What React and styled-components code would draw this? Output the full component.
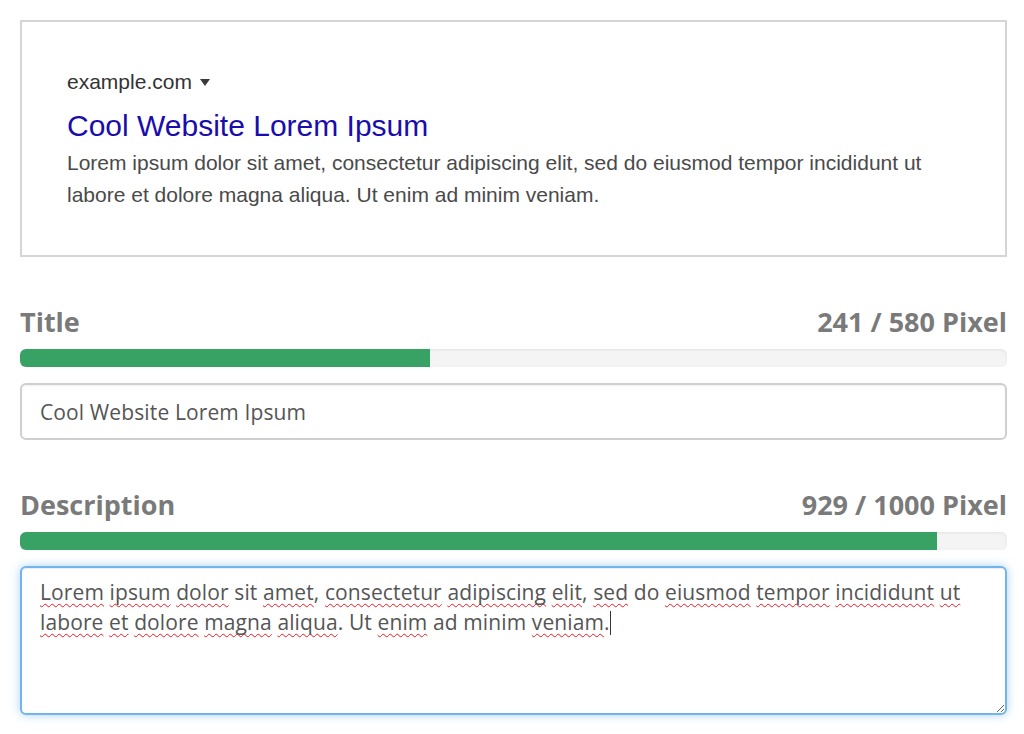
import React from "react";
import styled, { createGlobalStyle } from "styled-components";

const Global = createGlobalStyle`
  html, body { margin: 0; padding: 0; background: #fff; }
  body { font-family: "Open Sans", "Liberation Sans", sans-serif; }
  * { box-sizing: border-box; }
`;

const Page = styled.div`
  width: 1024px;
  padding: 20px 17px 20px 20px;
`;

const Preview = styled.div`
  border: 2px solid #d5d5d5;
  padding: 46px 45px 44px 45px;
  font-family: "Liberation Sans", Arial, sans-serif;
`;

const Url = styled.div`
  display: flex;
  align-items: center;
  font-size: 21px;
  line-height: 27px;
  color: #333;
  margin-bottom: 11px;
`;

const Caret = styled.span`
  display: inline-block;
  margin-left: 8px;
  margin-top: 2px;
  width: 0;
  height: 0;
  border-left: 5.5px solid transparent;
  border-right: 5.5px solid transparent;
  border-top: 7px solid #3a3a3a;
`;

const SerpTitle = styled.div`
  font-size: 30px;
  line-height: 39px;
  color: #1a0dab;
`;

const SerpDesc = styled.div`
  margin-top: 2px;
  font-size: 21px;
  line-height: 32px;
  color: #4a4a4a;
`;

const Section = styled.div`
  margin-top: 47px;
`;

const LabelRow = styled.div`
  display: flex;
  justify-content: space-between;
  align-items: baseline;
  font-family: "Open Sans", sans-serif;
  font-weight: 700;
  font-size: 27px;
  line-height: 36px;
  color: #7a7a7a;
  margin-bottom: 9px;
`;

const Track = styled.div`
  height: 18px;
  border-radius: 6px;
  background: #f4f4f4;
  box-shadow: inset 0 1px 3px rgba(0, 0, 0, 0.08);
  overflow: hidden;
  margin-bottom: 16px;
`;

const Fill = styled.div`
  height: 100%;
  background: #38a264;
`;

const Input = styled.input`
  display: block;
  width: 100%;
  height: 57px;
  padding: 0 18px;
  border: 2px solid #cfcfcf;
  border-radius: 6px;
  box-shadow: inset 0 1px 2px rgba(0, 0, 0, 0.06);
  font-family: "Open Sans", sans-serif;
  font-size: 21px;
  line-height: 30px;
  letter-spacing: 0.12px;
  color: #555;
  outline: none;
  background: #fff;
`;

const TextArea = styled.div`
  width: 100%;
  height: 149px;
  padding: 9px 18px 7px;
  border: 2px solid #72b4ed;
  border-radius: 6px;
  box-shadow: inset 0 1px 1px rgba(0, 0, 0, 0.075), 0 0 10px rgba(102, 175, 233, 0.55);
  font-family: "Open Sans", sans-serif;
  font-size: 21px;
  line-height: 30px;
  letter-spacing: 0.11px;
  color: #555;
  overflow: auto;
  resize: vertical;
  outline: none;
  background: #fff;
`;

const Miss = styled.span`
  text-decoration: underline wavy #f01820;
  text-decoration-thickness: 1px;
  text-underline-offset: 3px;
  text-decoration-skip-ink: none;
`;

const Cursor = styled.span`
  display: inline-block;
  width: 1px;
  height: 24px;
  background: #333;
  vertical-align: -5px;
`;

function Meter({ label, value, max }) {
  return (
    <>
      <LabelRow>
        <span>{label}</span>
        <span>
          {value} / {max} Pixel
        </span>
      </LabelRow>
      <Track>
        <Fill style={{ width: `${(value / max) * 100}%` }} />
      </Track>
    </>
  );
}

const words = [
  ["Lorem", 1], ["ipsum", 1], ["dolor", 1], ["sit", 0], ["amet", 1, ","],
  ["consectetur", 1], ["adipiscing", 1], ["elit", 1, ","], ["sed", 1], ["do", 0],
  ["eiusmod", 1], ["tempor", 1], ["incididunt", 1], ["ut", 1], ["labore", 1],
  ["et", 1], ["dolore", 1], ["magna", 1], ["aliqua", 1, "."], ["Ut", 0],
  ["enim", 1], ["ad", 0], ["minim", 0], ["veniam", 1, "."],
];

export default function App() {
  return (
    <Page>
      <Global />
      <Preview>
        <Url>
          example.com
          <Caret />
        </Url>
        <SerpTitle>Cool Website Lorem Ipsum</SerpTitle>
        <SerpDesc>
          Lorem ipsum dolor sit amet, consectetur adipiscing elit, sed do eiusmod tempor incididunt ut
          labore et dolore magna aliqua. Ut enim ad minim veniam.
        </SerpDesc>
      </Preview>

      <Section>
        <Meter label="Title" value={241} max={580} />
        <Input defaultValue="Cool Website Lorem Ipsum" />
      </Section>

      <Section>
        <Meter label="Description" value={929} max={1000} />
        <TextArea role="textbox" aria-multiline="true">
          {words.map(([w, m, p], i) => (
            <React.Fragment key={i}>
              {m ? <Miss>{w}</Miss> : w}
              {p || ""}
              {i < words.length - 1 ? " " : ""}
            </React.Fragment>
          ))}
          <Cursor />
        </TextArea>
      </Section>
    </Page>
  );
}
